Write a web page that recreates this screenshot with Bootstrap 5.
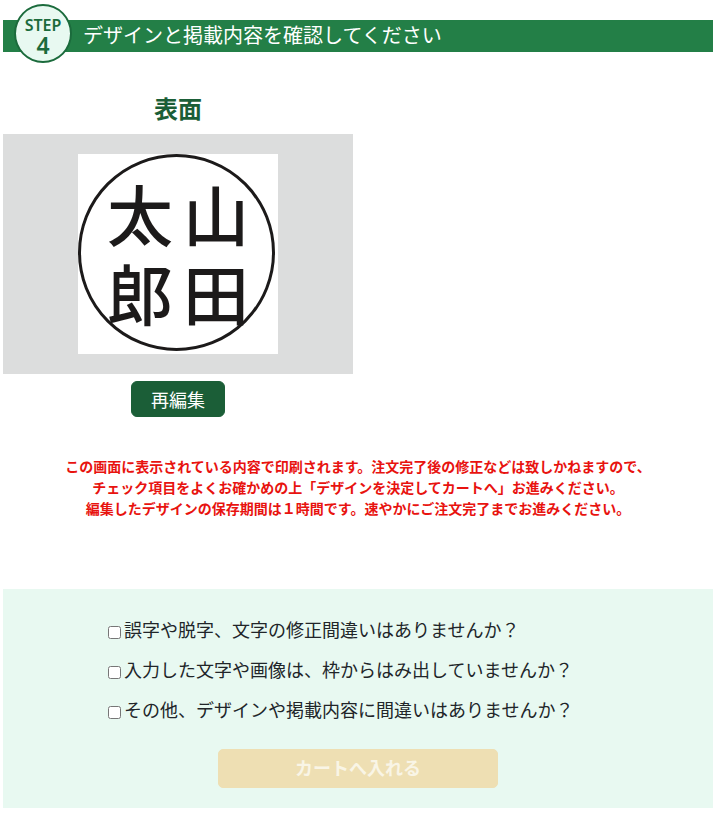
<!DOCTYPE html>
<html lang="ja">
<head>
<meta charset="utf-8">
<title>確認</title>
<link rel="stylesheet" href="https://cdn.jsdelivr.net/npm/bootstrap@5.3.0/dist/css/bootstrap.min.css">
<style>
html,body{background:#fff}
body{font-family:"Noto Sans","Noto Sans CJK JP",sans-serif;color:#212529;height:813px;overflow:hidden}
.pg-wrap{padding:4px 5px 0 3px}
.step-head{height:59px;padding-top:16px}
.step-bar{height:32px;background:#237f47;color:#fff;font-size:20px;line-height:32px;padding-left:80px;width:100%}
.step-circle{width:58px;height:59px;left:11px;top:0;border:2px solid #1b6b3c;background:#e8f9f1;color:#1b6b3c;line-height:1;font-weight:600}
.step-word{font-size:16px;margin-top:10px;line-height:18px}
.step-num{font-size:23px;line-height:23px}
.side-col{width:350px}
.side-title{color:#1b5e37;font-size:24px;font-weight:700;line-height:34px;margin:29px 0 8px}
.proof-box{height:240px;background:#dcdddd;padding-top:20px}
.proof-paper{width:200px;height:200px;background:#fff}
.seal-ring{width:197px;height:197px;border:3.5px solid #1c1a1a;border-radius:50%;left:0;top:0;filter:blur(.4px)}
.seal-cell{display:grid;grid-template-columns:76px 76px;grid-template-rows:79px 79px;margin-top:-4px;font-family:"Noto Sans CJK JP",sans-serif;font-size:66px;font-weight:500;line-height:79px;text-align:center;color:#1c1a1a;filter:blur(.4px)}
.seal-cell span{display:block}
.re-btn{width:94px;height:36px;background:#1b5e37;border-color:#1b5e37;color:#fff;font-size:18px;line-height:36px;padding:0;margin-top:7px;border-radius:6px}
.note-red{color:#e8130f;font-size:14px;font-weight:700;line-height:21px;margin:39px 0 0}
.check-panel{background:#e8f9f1;height:219px;margin-top:70px;padding:29px 0 0 105px}
.chk-row{height:40px;font-size:18px;line-height:24px}
.chk-row input{width:13px;height:13px;margin:8px 3px 0 0;flex:none}
.cart-btn{width:280px;height:39px;font-size:18px;font-weight:600;line-height:37px;padding:0;margin:11px 0 0 110px;border-radius:5px}
.cart-btn:disabled{background:#eedfb3;border-color:#eedfb3;color:#f9f5e6;opacity:1}
</style>
</head>
<body class="m-0">
<div class="pg-wrap">
  <div class="step-head position-relative">
    <div class="step-bar">デザインと掲載内容を確認してください</div>
    <div class="step-circle position-absolute rounded-circle text-center">
      <div class="step-word">STEP</div>
      <div class="step-num">4</div>
    </div>
  </div>
  <div class="side-col text-center">
    <div class="side-title">表面</div>
    <div class="proof-box d-flex justify-content-center">
      <div class="proof-paper position-relative d-flex align-items-center justify-content-center">
        <div class="seal-ring position-absolute"></div>
        <div class="seal-cell"><span>太</span><span>山</span><span>郎</span><span>田</span></div>
      </div>
    </div>
    <button type="button" class="btn re-btn">再編集</button>
  </div>
  <p class="note-red text-center">この画面に表示されている内容で印刷されます。注文完了後の修正などは致しかねますので、<br>チェック項目をよくお確かめの上「デザインを決定してカートへ」お進みください。<br>編集したデザインの保存期間は１時間です。速やかにご注文完了までお進みください。</p>
  <div class="check-panel">
    <label class="chk-row d-flex"><input type="checkbox"><span>誤字や脱字、文字の修正間違いはありませんか？</span></label>
    <label class="chk-row d-flex"><input type="checkbox"><span>入力した文字や画像は、枠からはみ出していませんか？</span></label>
    <label class="chk-row d-flex"><input type="checkbox"><span>その他、デザインや掲載内容に間違いはありませんか？</span></label>
    <button type="button" class="btn cart-btn" disabled>カートへ入れる</button>
  </div>
</div>
</body>
</html>
